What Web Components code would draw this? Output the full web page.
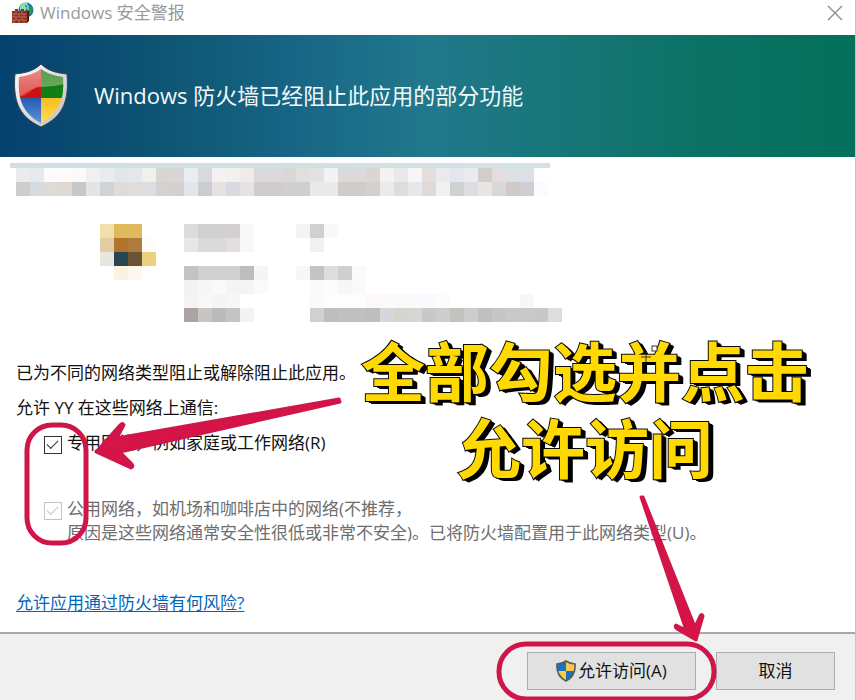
<!DOCTYPE html>
<html lang="zh-CN">
<head>
  <meta charset="utf-8">
  <meta name="viewport" content="width=device-width, initial-scale=1">
  <title>Windows 安全警报</title>
  <style>
    body {
      margin: 0;
      background: #fff;
      color: #111;
      font: 17px/24px "Open Sans", "Noto Sans CJK SC", sans-serif;
    }
  </style>
</head>
<body>
  <security-alert>
    <title-bar slot="title">Windows 安全警报</title-bar>
    <alert-banner slot="banner">Windows 防火墙已经阻止此应用的部分功能</alert-banner>
    <app-details></app-details>
    <network-options></network-options>
    <dialog-button slot="actions" shield wide>允许访问(A)</dialog-button>
    <dialog-button slot="actions">取消</dialog-button>
    <guide-marks slot="marks"></guide-marks>
  </security-alert>

  <script>
    class SecurityAlert extends HTMLElement {
      constructor() {
        super();
        this.attachShadow({ mode: "open" }).innerHTML = `
        <style>
          :host {
            position: relative;
            display: flex;
            flex-direction: column;
            box-sizing: border-box;
            min-height: 100vh;
            border-right: 1px solid #c4c4c4;
            overflow: hidden;
          }

          main {
            flex: 1;
            padding: 6px 16px 16px;
          }

          footer {
            display: flex;
            justify-content: flex-end;
            gap: 20px;
            padding: 18px 20px 10px;
            border-top: 2px solid #a8a8a8;
            background: #f0f0f0;
          }
        </style>
        <slot name="title"></slot>
        <slot name="banner"></slot>
        <main><slot></slot></main>
        <footer><slot name="actions"></slot></footer>
        <slot name="marks"></slot>
        `;
      }
    }

    class TitleBar extends HTMLElement {
      constructor() {
        super();
        this.attachShadow({ mode: "open" }).innerHTML = `
        <style>
          :host {
            display: flex;
            align-items: center;
            gap: 6px;
            padding: 0 12px 9px;
            height: 26px;
            color: #999;
          }

          .text {
            flex: 1;
          }

          button {
            display: flex;
            padding: 0;
            border: 0;
            background: none;
          }
        </style>
        <svg width="22" height="22" viewBox="0 0 22 22" aria-hidden="true">
          <circle cx="14" cy="8" r="7.5" fill="#1b74ad"/>
          <path d="M8 4Q11 0 15 1L13 4 15 6 12 10 8 8Z" fill="#8fdf9e"/>
          <path d="M16 2Q21 4 21 9L18 12 16 9 18 6Z" fill="#1c9a52"/>
          <path d="M14 1Q18 6 15 14" fill="none" stroke="#8fd5f5" stroke-width="1.5"/>
          <path d="M0 9H3V7H6V9H9V7H12V9H15V21H0Z" fill="#8f2f1f"/>
          <path d="M0 12H15M0 15H15M0 18H15M4 9V12M10 9V12M2 12V15M7 12V15M12 12V15M4 15V18M10 15V18M2 18V21M7 18V21M12 18V21" stroke="#c98a74" stroke-width=".6"/>
          <path d="M15 9L17 8V19L15 21Z" fill="#531a12"/>
        </svg>
        <span class="text"><slot></slot></span>
        <button aria-label="关闭">
          <svg width="16" height="16" viewBox="0 0 16 16"><path d="M1 1L15 15M15 1L1 15" stroke="#8c8c8c" stroke-width="1.4"/></svg>
        </button>
        `;
      }
    }

    class AlertBanner extends HTMLElement {
      constructor() {
        super();
        this.attachShadow({ mode: "open" }).innerHTML = `
        <style>
          :host {
            display: flex;
            align-items: center;
            gap: 25px;
            box-sizing: border-box;
            height: 122px;
            padding: 0 0 3px 13px;
            background: linear-gradient(90deg, #05416e, #0e5674 20%, #176585 34%, #21788c 50%, #18767a 64%, #0b7265 82%, #04705b);
            color: #f2f8fa;
          }

          h1 {
            margin: 0;
            font-size: 22px;
            line-height: 32px;
            font-weight: 400;
          }
        </style>
        <svg width="56" height="66" viewBox="0 0 56 66" aria-hidden="true">
          <defs>
            <clipPath id="inner"><path d="M28 7C35 12 42 14 50 15C51 34 49 50 28 61C7 50 5 34 6 15C14 14 21 12 28 7Z"/></clipPath>
            <linearGradient id="rim" x2="1" y2="1"><stop stop-color="#fff"/><stop offset="1" stop-color="#b8bec2"/></linearGradient>
            <linearGradient id="red" x2="0" y2="1"><stop stop-color="#e88080"/><stop offset="1" stop-color="#d9291f"/></linearGradient>
            <linearGradient id="green" x2="0" y2="1"><stop stop-color="#2c7e28"/><stop offset="1" stop-color="#4da02c"/></linearGradient>
            <linearGradient id="blue" x2="0" y2="1"><stop stop-color="#285bae"/><stop offset="1" stop-color="#699be4"/></linearGradient>
            <linearGradient id="yellow" x2="0" y2="1"><stop stop-color="#f7bd20"/><stop offset="1" stop-color="#ffe563"/></linearGradient>
          </defs>
          <path d="M28 2C35 9 44 11 54 12C56 36 52 54 28 65C4 54 0 36 2 12C12 11 21 9 28 2Z" fill="url(#rim)" stroke="#36454a"/>
          <g clip-path="url(#inner)">
            <path fill="url(#red)" d="M0 0H28V36H0Z"/>
            <path fill="url(#green)" d="M28 0H56V36H28Z"/>
            <path fill="url(#blue)" d="M0 36H28V66H0Z"/>
            <path fill="url(#yellow)" d="M28 36H56V66H28Z"/>
            <path d="M0 36Q12 35 18 29T28 25V36Z" fill="#d01010"/>
            <path d="M28 25Q42 25 56 21V36H28Z" fill="#108016"/>
            <path d="M0 0H56V21Q42 25 28 25 18 26 10 33L0 36Z" fill="#fff" opacity=".2"/>
          </g>
        </svg>
        <h1><slot></slot></h1>
        `;
      }
    }

    // Runs of obscured blocks: [row, first column, colours...]
    const BLOCKS = [
      [0, 0, "ebebeb", "e6eaec", "fcfbf9", "fcfbf9", "fbfaf8", "f1f0ee", "e8ecef", "e0e6ea", "e5e8ea", "f0f0ee", "d8d6d5", "dad6d6", "e8edf1", "dadadd", "f4f2f0", "f3f1f0", "efebea", "dadada", "dadada", "dad8d7", "e3dfdd", "e3e2e2", "f2f3f3", "dadada", "dadada", "dcd5d3", "f3f2f2", "ebe8e6", "f5f6f7", "e4dddb", "ebe9ea", "e4e8ee", "e8ebf0", "d2cccb", "e5dddb", "dde0e5", "dde0e5"],
      [1, 0, "cfcccd", "d7dadf", "dedad6", "dfd9d2", "c8c8c9", "e3e4e6", "d0d2d8", "dedcd8", "e0dcd7", "dadde1", "d4d2cf", "d5cfcf", "e2e6eb", "cbccd2", "e6e2e0", "d7dae0", "e7e2e2", "d0cccb", "d0cccb", "d0cfcd", "cfcfd0", "ebe9e7", "ebe9e7", "cfccc9", "cfccc9", "d4d0ce", "ebebec", "dcdddf", "e6e8ec", "dedad8", "f2f1f2", "d0d1d3", "dcdee2", "e8e5e5", "dad8d6", "cfcac8", "cfcfd3", "fafbff"],
      [4, 6, "f3dfac", "dfba5c", "dfba5c"],
      [5, 6, "e4cca2", "b2732d", "ad7c3d", "fdfcf8"],
      [6, 6, "e9e6df", "294551", "695235", "ebd17f"],
      [7, 7, "fbf2df", "fdf8ed"],
      [4, 12, "dcdcdd", "d0d0d0", "d0d0d0", "d2cfce", "f8f8f8"],
      [5, 12, "e7e7eb", "dadadb", "dadadb", "e2dfde", "f8f8f8"],
      [7, 12, "c3c3c3", "d0d0d0", "d0d0d0", "d0d0d0", "bdbdbd", "f5f5f5"],
      [8, 12, "f2f3f4", "f5f6f6", "f9f9f9", "f3f4f5", "f4f4f4", "fafafa"],
      [9, 12, "f7f3f3", "f8f8f8", "f5f5f5", "f7f7f7"],
      [10, 12, "aaa5a2", "c7c6c2", "babbbb", "c3c4c5", "f3f3f3"],
      [4, 20, "f7f3f1", "d0d0d0", "f8f8f8"],
      [5, 21, "f0f0f0"],
      [7, 20, "faf7f2", "c4c4c2", "dddddd", "cfcfcf", "fafafa"],
      [8, 21, "fafafa", "fcfcfc", "f7f7f7", "fafafa"],
      [9, 21, "f9f9f9", "fdfdfd", "fdfdfd", "fdfdfd", "fbf8f7", "fbfaf7", "f8f9fb", "f9fafa", "f9faff", "fcfcfc"],
      [9, 36, "f8f7f7"],
      [10, 21, "d0d0d1", "bdbdbd", "c1c0bf", "c1c0be", "bfbebc", "d5d7dc", "d6d4cd", "d6d6d5", "c7c8ca", "cdcdcc", "c4c2bf", "cdcdcd", "c1c0bf", "c7c6c5", "c9c9c9", "c9c9c8", "cac8c7", "dcdde1"]
    ];

    class AppDetails extends HTMLElement {
      constructor() {
        super();
        this.attachShadow({ mode: "open" }).innerHTML = `
        <style>
          :host {
            display: block;
          }

          .bar {
            width: 540px;
            height: 5px;
            margin-left: -6px;
            background: linear-gradient(90deg, #d2dee6, #d2e2e5);
          }

          svg {
            display: block;
          }
        </style>
        <div class="bar"></div>
        <svg width="560" height="154" viewBox="0 0 560 154" aria-hidden="true" shape-rendering="crispEdges"></svg>
        `;
        this.shadowRoot.querySelector("svg").innerHTML = BLOCKS.map(([row, col, ...colours]) =>
          colours.map((colour, i) =>
            `<rect x="${(col + i) * 14}" y="${row * 14}" width="14" height="14" fill="#${colour}"/>`
          ).join("")
        ).join("");
      }
    }

    class NetworkCheck extends HTMLElement {
      constructor() {
        super();
        const disabled = this.hasAttribute("disabled") ? "disabled" : "";
        this.attachShadow({ mode: "open" }).innerHTML = `
        <style>
          :host {
            display: flex;
            align-items: flex-start;
            gap: 5px;
            padding-left: 28px;
          }

          :host([disabled]) {
            color: #6e6e6e;
          }

          input {
            appearance: none;
            flex: none;
            box-sizing: border-box;
            width: 18px;
            height: 18px;
            margin: 5px 0 0;
            border: 1px solid #333;
            background: #fff;
          }

          input:checked::before {
            content: "";
            display: block;
            width: 10px;
            height: 5px;
            margin: 3px 0 0 2px;
            border: solid #333;
            border-width: 0 0 1px 1px;
            transform: rotate(-45deg);
          }

          input:disabled,
          input:disabled::before {
            border-color: #c4c4c4;
          }
        </style>
        <input type="checkbox" id="network" checked ${disabled}>
        <label for="network"><slot></slot></label>
        `;
      }
    }

    class NetworkOptions extends HTMLElement {
      constructor() {
        super();
        this.attachShadow({ mode: "open" }).innerHTML = `
        <style>
          :host {
            display: block;
            padding-top: 39px;
          }

          p {
            margin: 0 0 11px;
          }

          .public {
            margin: 42px 0 46px;
          }

          a {
            color: #0066b8;
            text-underline-offset: 2px;
          }
        </style>
        <p>已为不同的网络类型阻止或解除阻止此应用。</p>
        <p>允许 YY 在这些网络上通信:</p>
        <network-check>专用网络，例如家庭或工作网络(R)</network-check>
        <network-check class="public" disabled>公用网络，如机场和咖啡店中的网络(不推荐，<br>原因是这些网络通常安全性很低或非常不安全)。已将防火墙配置用于此网络类型(U)。</network-check>
        <a href="#">允许应用通过防火墙有何风险?</a>
        `;
      }
    }

    class DialogButton extends HTMLElement {
      constructor() {
        super();
        const shield = `
          <svg width="20" height="22" viewBox="0 0 20 22" aria-hidden="true">
            <path d="M10 1Q14 4 19 4Q20 16 10 21Q0 16 1 4Q6 4 10 1Z" fill="#1673bd"/>
            <path d="M10 1Q14 4 19 4L19 11H10ZM1 11H10V21Q2 17 1 11Z" fill="#fbc94d"/>
            <path d="M10 1Q14 4 19 4Q20 16 10 21Q0 16 1 4Q6 4 10 1Z" fill="none" stroke="#5c5c58" stroke-width="1.6"/>
          </svg>`;
        this.attachShadow({ mode: "open" }).innerHTML = `
        <style>
          :host {
            display: block;
          }

          button {
            display: flex;
            align-items: center;
            justify-content: center;
            gap: 2px;
            min-width: 119px;
            height: 38px;
            padding: 0 16px;
            border: 1px solid #adadad;
            background: #e1e1e1;
            color: #111;
            font: inherit;
          }

          :host([wide]) button {
            min-width: 169px;
          }
        </style>
        <button>${this.hasAttribute("shield") ? shield : ""}<slot></slot></button>
        `;
      }
    }

    // Hand-placed tutorial marks that lie over the dialog
    class GuideMarks extends HTMLElement {
      constructor() {
        super();
        this.attachShadow({ mode: "open" }).innerHTML = `
        <style>
          :host {
            position: absolute;
            inset: 0;
            pointer-events: none;
          }

          svg {
            position: absolute;
            inset: 0;
            width: 100%;
            height: 100%;
          }

          p {
            position: absolute;
            left: 361px;
            top: 330px;
            margin: 0;
            color: #ffd900;
            font: 700 64px/77px "Noto Sans CJK SC", sans-serif;
            text-align: center;
            white-space: nowrap;
            -webkit-text-stroke: 2px #0a0a0a;
            paint-order: stroke fill;
            text-shadow: 1px 1px #000, 2px 1px #000, 3px 2px #000, 4px 2px #000, 5px 3px #000;
          }
        </style>
        <p>全部勾选并点击<br>允许访问</p>
        <svg aria-hidden="true">
          <g fill="none" stroke="#d01648" stroke-width="5">
            <rect x="27" y="425" width="59" height="118" rx="25"/>
            <rect x="499" y="644" width="215" height="55" rx="27"/>
          </g>
          <g fill="#d61448" stroke="#d01648" stroke-width="3" stroke-linejoin="round">
            <path d="M339 399L117 438 124 425Q123 422 120 425L96 452 131 468Q134 467 132 464L120 452 340 402Z"/>
            <path d="M641 497L686 630 676 625Q674 627 677 629L696 640 703 616Q702 613 700 616L695 627 643 497Z"/>
          </g>
          <rect x="652" y="346" width="5" height="5" fill="#fff" stroke="#333"/>
          <path d="M641 357H651M646 352V362" stroke="#333" fill="none"/>
        </svg>
        `;
      }
    }

    customElements.define("security-alert", SecurityAlert);
    customElements.define("title-bar", TitleBar);
    customElements.define("alert-banner", AlertBanner);
    customElements.define("app-details", AppDetails);
    customElements.define("network-check", NetworkCheck);
    customElements.define("network-options", NetworkOptions);
    customElements.define("dialog-button", DialogButton);
    customElements.define("guide-marks", GuideMarks);
  </script>
</body>
</html>
